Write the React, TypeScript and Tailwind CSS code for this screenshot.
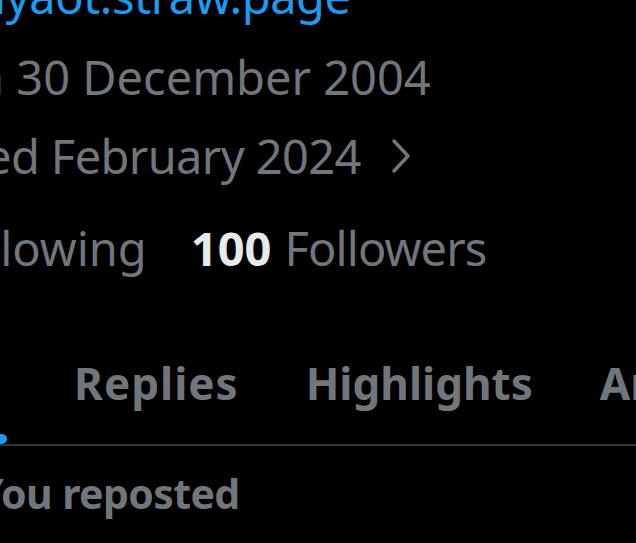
import React from 'react';

const tabs = ['Replies', 'Highlights', 'Articles'];

const ProfileMeta: React.FC = () => {
  return (
    <div className="text-[47px] text-[#71767b]">
      {/* website link, mostly scrolled off the top */}
      <div className="h-[82px] leading-[82px] mt-[-45px] ml-[-6px] tracking-[-0.4px] text-[#1d9bf0] whitespace-nowrap">
        lyaot.straw.page
      </div>
      <div className="h-[79px] leading-[80px] ml-[-25px] whitespace-nowrap">n 30 December 2004</div>
      <div className="h-[80px] leading-[80px] ml-[-15px] flex items-center whitespace-nowrap">
        <span className="tracking-[-0.6px]">ed February 2024</span>
        <svg width="22" height="36" viewBox="0 0 22 36" className="ml-[29px]" fill="none">
          <polyline points="4,3 18,18 4,33" stroke="#71767b" strokeWidth="3.5" strokeLinecap="round" strokeLinejoin="round" />
        </svg>
      </div>
      <div className="h-[80px] leading-[80px] mt-[12px] ml-[-12px] flex whitespace-nowrap">
        <span>llowing</span>
        <span className="ml-[44px] font-bold text-[#e7e9ea]">100</span>
        <span className="ml-[13px] tracking-[-0.9px]">Followers</span>
      </div>
    </div>
  );
};

const TabBar: React.FC = () => {
  return (
    <div className="mt-[34px] h-[122px] flex gap-[67px] ml-[-123px] text-[44px] font-bold text-[#71767b] whitespace-nowrap">
      <div className="flex flex-col h-full">
        <div className="flex-1 flex items-center pr-[12px] text-[#e7e9ea]">Posts</div>
        <div className="h-[10px] rounded-full bg-[#1d9bf0]" />
      </div>
      {tabs.map(t => (
        <div key={t} className="flex flex-col h-full">
          <div className={`flex-1 flex items-center ${t === 'Replies' ? 'tracking-[1px]' : ''}`}>{t}</div>
        </div>
      ))}
    </div>
  );
};

export default function App() {
  return (
    <div className="w-[636px] h-[543px] bg-black overflow-hidden" style={{ fontFamily: '"Noto Sans", sans-serif' }}>
      <ProfileMeta />
      <TabBar />
      <div className="h-[2px] bg-[#2f3336]" />
      <div className="h-[80px] leading-[80px] mt-[7px] ml-[-22px] text-[41px] font-bold tracking-[-0.6px] text-[#71767b] whitespace-nowrap">
        You reposted
      </div>
    </div>
  );
}
